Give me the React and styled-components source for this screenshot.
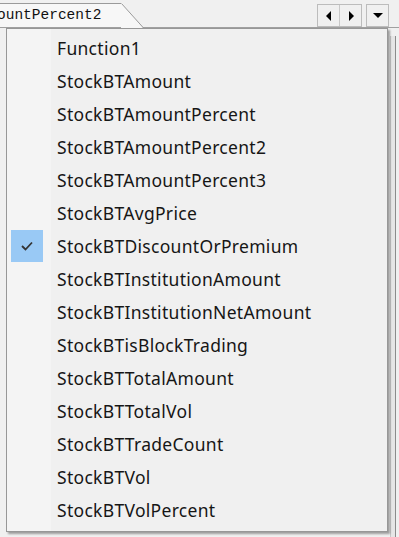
import React from "react";
import styled, { createGlobalStyle } from "styled-components";

const Global = createGlobalStyle`
  html, body { margin: 0; padding: 0; }
  body { width: 399px; height: 537px; overflow: hidden; background: #f0f0f0; }
`;

const items = [
  "Function1",
  "StockBTAmount",
  "StockBTAmountPercent",
  "StockBTAmountPercent2",
  "StockBTAmountPercent3",
  "StockBTAvgPrice",
  "StockBTDiscountOrPremium",
  "StockBTInstitutionAmount",
  "StockBTInstitutionNetAmount",
  "StockBTisBlockTrading",
  "StockBTTotalAmount",
  "StockBTTotalVol",
  "StockBTTradeCount",
  "StockBTVol",
  "StockBTVolPercent",
];
const CHECKED = "StockBTDiscountOrPremium";

const Screen = styled.div`
  position: relative;
  width: 399px;
  height: 537px;
  background: #f0f0f0;
  display: flex;
  flex-direction: column;
  overflow: hidden;
`;

const TabStrip = styled.div`
  height: 28px;
  display: flex;
  align-items: flex-end;
  border-bottom: 1px solid #a0a0a0;
  box-sizing: border-box;
  position: relative;
`;

const Tab = styled.div`
  position: relative;
  height: 24px;
  width: 122px;
  background: #f7f7f7;
  border-top: 1px solid #9a9a9a;
  box-sizing: border-box;
  font-family: "Liberation Mono", "DejaVu Sans Mono", monospace;
  font-size: 14.5px;
  color: #111;
  line-height: 22px;
  white-space: nowrap;
  overflow: visible;
  & > span { margin-left: -3px; }
`;

const TabSlant = styled.svg`
  position: absolute;
  left: 121px;
  top: -1px;
`;

const NavGroup = styled.div`
  margin-left: auto;
  margin-right: 10px;
  align-self: flex-start;
  margin-top: 4px;
  display: flex;
  gap: 4px;
`;

const BtnGroup = styled.div`
  display: flex;
  border: 1px solid #bcbcbc;
  background: #f0f0f0;
  height: 21px;
`;

const NavBtn = styled.div`
  width: 21px;
  display: flex;
  align-items: center;
  justify-content: center;
  & + & { border-left: 1px solid #c8c8c8; }
`;

const Workspace = styled.div`
  flex: 1;
  position: relative;
  display: flex;
  justify-content: flex-end;
`;

const RightRail = styled.div`
  width: 4px;
  margin: 8px 3px 0 0;
  border-left: 1px solid #c8c8c8;
  border-right: 1px solid #8c8c8c;
  background: #e6e6e6;
`;

const Menu = styled.div`
  position: absolute;
  left: 6px;
  top: 28px;
  width: 382px;
  height: 504px;
  box-sizing: border-box;
  border: 1px solid #979797;
  background: linear-gradient(to right, #f4f4f4 0 44px, #f0f0f0 44px);
  box-shadow: 2px 2px 2px rgba(0, 0, 0, 0.35);
  padding: 2px 2px 4px;
  display: flex;
  flex-direction: column;
`;

const Item = styled.div`
  height: 33px;
  display: flex;
  align-items: center;
  font-family: "Noto Sans", "Open Sans", sans-serif;
  font-size: 17.5px;
  letter-spacing: 0.3px;
  color: #161616;
  white-space: nowrap;
`;

const Gutter = styled.div`
  width: 48px;
  height: 33px;
  display: flex;
  align-items: center;
  padding-left: 2px;
  box-sizing: border-box;
`;

const CheckBox = styled.div`
  width: 32px;
  height: 32px;
  background: ${(p) => (p.$on ? "#99c9f5" : "transparent")};
  display: flex;
  align-items: center;
  justify-content: center;
`;

const Label = styled.span`
  margin-left: 0;
`;

export default function App() {
  return (
    <Screen>
      <Global />
      <TabStrip>
        <Tab>
          <span>ountPercent2</span>
          <TabSlant width="24" height="26" viewBox="0 0 24 26">
            <polygon points="0,0 1,0 23,26 0,26" fill="#f7f7f7" />
            <line x1="0.5" y1="0.5" x2="23" y2="25.5" stroke="#9a9a9a" strokeWidth="1" />
          </TabSlant>
        </Tab>
        <NavGroup>
          <BtnGroup>
            <NavBtn>
              <svg width="8" height="10" viewBox="0 0 8 10"><polygon points="6,0 6,10 1,5" fill="#000" /></svg>
            </NavBtn>
            <NavBtn>
              <svg width="8" height="10" viewBox="0 0 8 10"><polygon points="2,0 2,10 7,5" fill="#000" /></svg>
            </NavBtn>
          </BtnGroup>
          <BtnGroup>
            <NavBtn>
              <svg width="10" height="6" viewBox="0 0 10 6"><polygon points="0,0 10,0 5,5" fill="#000" /></svg>
            </NavBtn>
          </BtnGroup>
        </NavGroup>
      </TabStrip>
      <Workspace>
        <RightRail />
      </Workspace>
      <Menu>
        {items.map((t) => (
          <Item key={t}>
            <Gutter>
              <CheckBox $on={t === CHECKED}>
                {t === CHECKED && (
                  <svg width="12" height="10" viewBox="0 0 12 10">
                    <polyline points="1,5 4.5,8.5 11,1.5" fill="none" stroke="#333" strokeWidth="1.8" />
                  </svg>
                )}
              </CheckBox>
            </Gutter>
            <Label>{t}</Label>
          </Item>
        ))}
      </Menu>
    </Screen>
  );
}
